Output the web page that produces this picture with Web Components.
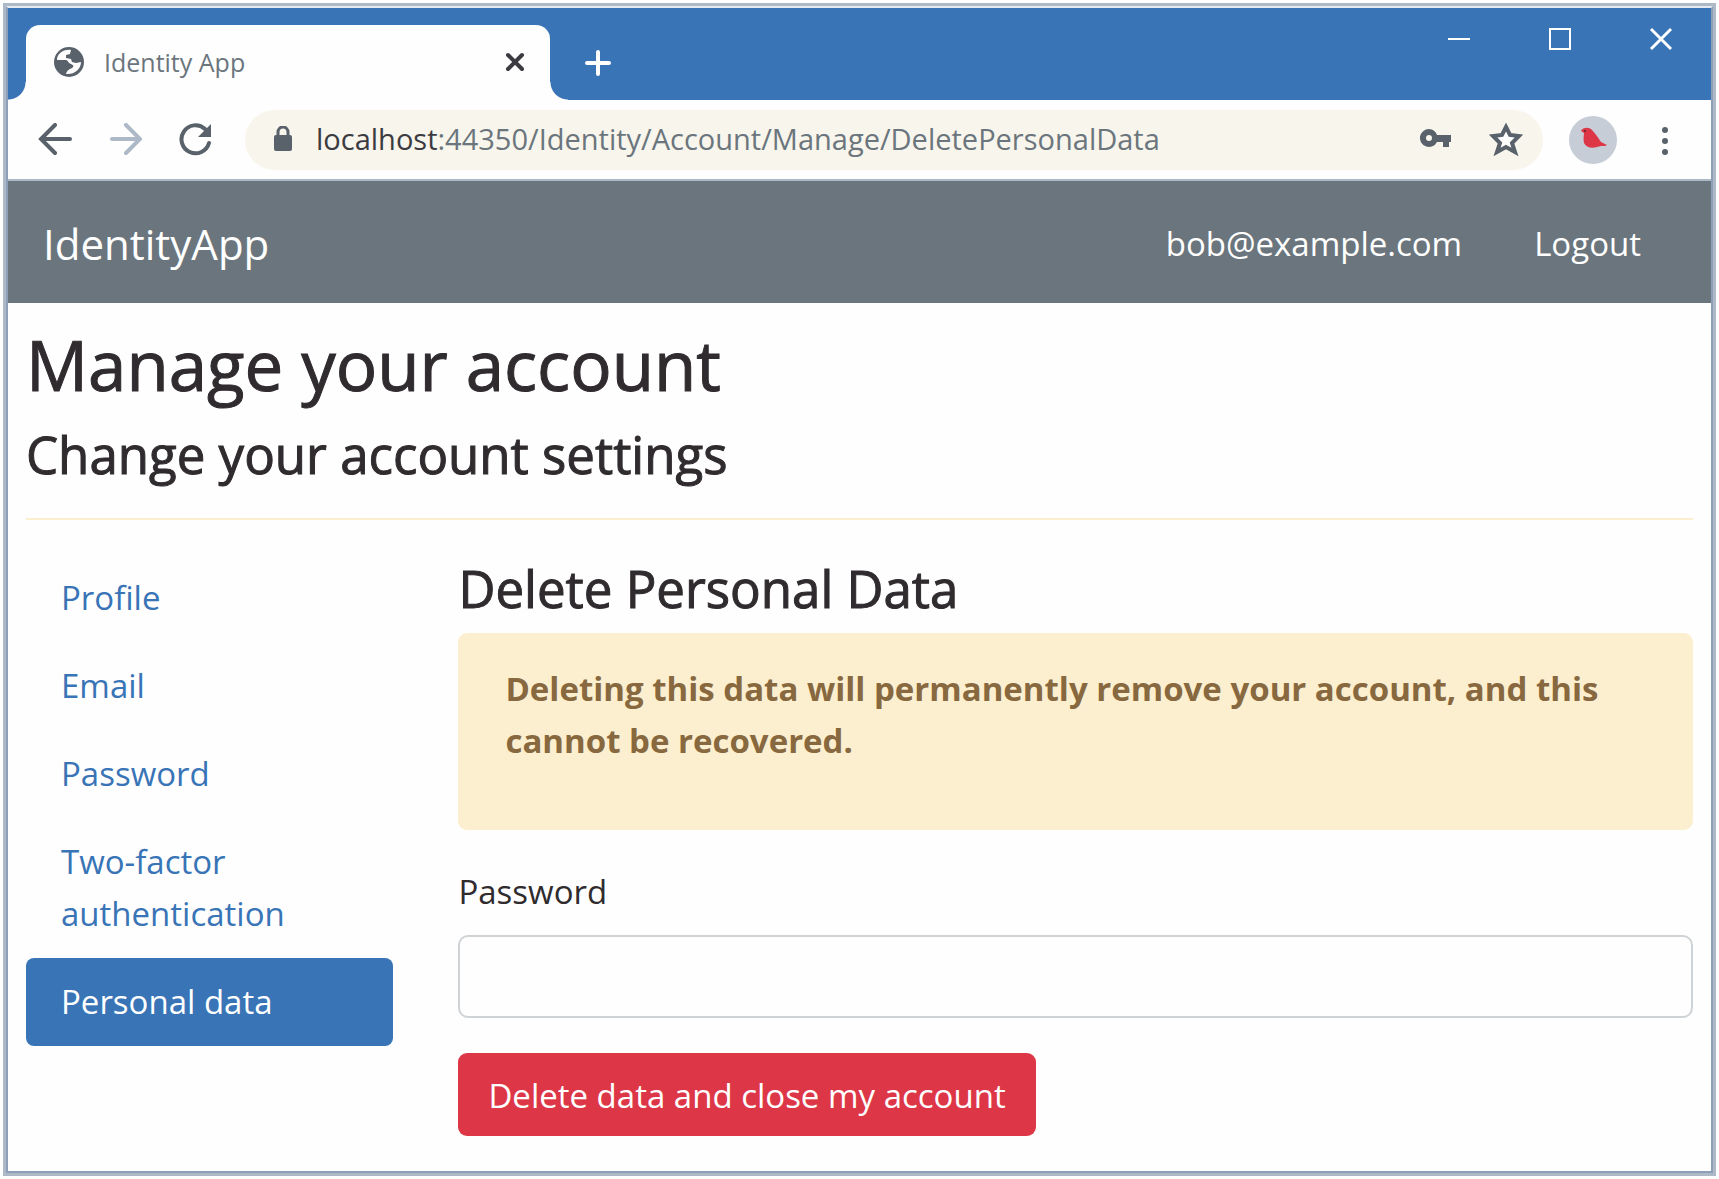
<!DOCTYPE html>
<html lang="en">
<head>
<meta charset="utf-8">
<meta name="viewport" content="width=device-width, initial-scale=1">
<title>Identity App</title>
<style>
  html, body { margin: 0; }
  body {
    --blue: #3874b6;
    --slate: #6b757d;
    --mist: #adb9c7;
    --ink: #2f2b2e;
    --red: #dd3747;
    --cream: #fbefcf;
    font-family: "Open Sans", "Noto Sans", sans-serif;
    font-size: 33px;
    line-height: 52px;
    color: var(--ink);
    background: #fefefe;
  }
</style>
</head>
<body>
<browser-window>
  <tab-strip slot="tabs" label="Identity App"></tab-strip>
  <browser-toolbar slot="toolbar">
    <address-bar host="localhost" path=":44350/Identity/Account/Manage/DeletePersonalData"></address-bar>
  </browser-toolbar>
  <app-navbar brand="IdentityApp">
    <nav-link href="#manage">bob@example.com</nav-link>
    <nav-link href="#logout">Logout</nav-link>
  </app-navbar>
  <manage-page>
    <span slot="title">Manage your account</span>
    <span slot="subtitle">Change your account settings</span>
    <side-item slot="menu" href="#profile">Profile</side-item>
    <side-item slot="menu" href="#email">Email</side-item>
    <side-item slot="menu" href="#password">Password</side-item>
    <side-item slot="menu" href="#two-factor">Two-factor authentication</side-item>
    <side-item slot="menu" href="#personal-data" active>Personal data</side-item>
    <delete-data-form>
      <span slot="heading">Delete Personal Data</span>
      <alert-box slot="alert">Deleting this data will permanently remove your account, and this cannot be recovered.</alert-box>
    </delete-data-form>
  </manage-page>
</browser-window>

<script>
const define = (name, html, setup) => {
  const template = document.createElement('template');
  template.innerHTML = html;
  customElements.define(name, class extends HTMLElement {
    constructor() {
      super();
      this.attachShadow({ mode: 'open' }).append(template.content.cloneNode(true));
    }
    connectedCallback() {
      if (setup) setup(this.shadowRoot, this);
    }
  });
};

define('browser-window', `
  <style>
    :host { display: flex; flex-direction: column; box-sizing: border-box; min-height: 100vh; padding: 3px; }
    .outer { flex: 1; display: flex; border: 3px solid var(--mist); }
    .inner { flex: 1; min-width: 0; border: 2px solid #8da0b8; border-top-color: #e4e9ef; }
  </style>
  <div class="outer"><div class="inner">
    <slot name="tabs"></slot>
    <slot name="toolbar"></slot>
    <slot></slot>
  </div></div>`);

define('tab-strip', `
  <style>
    :host { display: flex; height: 92px; background: var(--blue); }
    button { border: 0; padding: 0; background: none; display: flex; align-items: center; justify-content: center; }
    .flare { align-self: flex-end; width: 18px; height: 18px; }
    .flare.left { background: radial-gradient(circle at 0 0, var(--blue) 17px, #fefefe 18px); }
    .flare.right { background: radial-gradient(circle at 100% 0, var(--blue) 17px, #fefefe 18px); }
    .tab { display: flex; align-items: center; box-sizing: border-box; width: 524px; margin-top: 17px; padding: 0 25px 2px 27px; background: #fefefe; border-radius: 14px 14px 0 0; }
    .title { flex: 1; margin-left: 19px; font-size: 25px; line-height: 36px; color: var(--slate); }
    .new { width: 60px; margin-top: 17px; }
    .controls { display: flex; margin-left: auto; height: 61px; }
    .controls button { width: 101px; }
    svg { display: block; }
  </style>
  <span class="flare left"></span>
  <div class="tab">
    <svg width="32" height="32" viewBox="0 0 32 32"><circle cx="16" cy="16" r="15" fill="#59616a"/><path fill="#fefefe" d="M18 4C10 3 4 8 4 14h9c2 0 2 3 5 4s3 3 1 4-5 2-6 6c8 1 15-5 15-12l-5 1-4-1-1-3-5-1v-3l4-1z"/></svg>
    <span class="title"></span>
    <button aria-label="Close tab"><svg width="20" height="20" viewBox="0 0 20 20" stroke="#3b3b41" stroke-width="4" stroke-linecap="round"><path d="M3 3l14 14M17 3L3 17"/></svg></button>
  </div>
  <span class="flare right"></span>
  <button class="new" aria-label="New tab"><svg width="28" height="28" viewBox="0 0 28 28" stroke="#fff" stroke-width="4" stroke-linecap="round"><path d="M14 3v22M3 14h22"/></svg></button>
  <div class="controls">
    <button aria-label="Minimize"><svg width="24" height="24" viewBox="0 0 24 24"><path d="M1 12h22" stroke="#fff" stroke-width="2"/></svg></button>
    <button aria-label="Maximize"><svg width="24" height="24" viewBox="0 0 24 24"><rect x="2" y="2" width="20" height="20" fill="none" stroke="#fff" stroke-width="2"/></svg></button>
    <button aria-label="Close"><svg width="24" height="24" viewBox="0 0 24 24"><path d="M2 2l20 20M22 2L2 22" stroke="#fff" stroke-width="3"/></svg></button>
  </div>`, (root, host) => { root.querySelector('.title').textContent = host.getAttribute('label'); });

define('browser-toolbar', `
  <style>
    :host { display: flex; align-items: center; height: 79px; padding: 0 28px 0 30px; border-bottom: 2px solid var(--mist); background: #fefefe; }
    button { border: 0; padding: 0; background: none; flex: none; }
    svg { display: block; }
    .nav { display: flex; gap: 36px; }
    slot { display: block; flex: 1; min-width: 0; margin: 0 26px 0 33px; }
    .menu { margin-left: 34px; }
  </style>
  <div class="nav">
    <button aria-label="Back"><svg width="34" height="34" viewBox="0 0 34 34" fill="none" stroke="#59616a" stroke-width="4" stroke-linecap="round"><path d="M32 16H4M17 2L3 16l14 14"/></svg></button>
    <button aria-label="Forward"><svg width="34" height="34" viewBox="0 0 34 34" fill="none" stroke="#adb9c7" stroke-width="4" stroke-linecap="round"><path d="M4 16h28M18 2l14 14-14 14"/></svg></button>
    <button aria-label="Reload"><svg width="34" height="34" viewBox="0 0 34 34"><path d="M31 20A14 14 0 1 1 27 6" fill="none" stroke="#59616a" stroke-width="4" stroke-linecap="round"/><path d="M33 1v13H20z" fill="#59616a"/></svg></button>
  </div>
  <slot></slot>
  <button aria-label="Profile"><svg width="48" height="48" viewBox="0 0 48 48"><circle cx="24" cy="24" r="24" fill="#c6cdd7"/><path fill="#dd3747" d="M12 15C14 11 20 11 23 14c4 4 7 9 9 12l6 3-2 1h-4l-4 1c-6 2-11 0-13-4-1-4 0-8 0-10z"/><circle cx="16" cy="15" r="1" fill="#59262c"/></svg></button>
  <button class="menu" aria-label="Menu"><svg width="32" height="34" viewBox="0 0 32 34" fill="#59616a"><circle cx="14" cy="7" r="3"/><circle cx="14" cy="18" r="3"/><circle cx="14" cy="29" r="3"/></svg></button>`);

define('address-bar', `
  <style>
    :host { display: flex; align-items: center; height: 60px; padding: 0 20px 0 28px; border-radius: 30px; background: #f8f5ec; }
    .url { flex: 1; min-width: 0; margin-left: 23px; padding-bottom: 2px; font-size: 29px; line-height: 40px; white-space: nowrap; color: var(--slate); outline: 0; }
    .host { color: #3b3b41; }
    button { border: 0; padding: 0; background: none; flex: none; }
    svg { display: block; }
    .star { margin-left: 36px; }
  </style>
  <svg width="20" height="28" viewBox="0 0 20 28"><rect x="1" y="9" width="18" height="16" rx="2" fill="#59616a"/><path d="M5 10V6a5 5 0 0 1 10 0v4" fill="none" stroke="#59616a" stroke-width="3"/></svg>
  <div class="url" role="textbox" aria-label="Address" contenteditable="true" spellcheck="false"><span class="host"></span><span class="path"></span></div>
  <button aria-label="Passwords"><svg width="34" height="24" viewBox="0 0 34 24"><path fill="#59616a" fill-rule="evenodd" d="M10 1a9 9 0 0 1 8 6h14v7h-2v5h-6v-5h-6a9 9 0 1 1-8-13zM10 7a3 3 0 1 0 0 6 3 3 0 0 0 0-6z"/></svg></button>
  <button class="star" aria-label="Bookmark"><svg width="34" height="34" viewBox="0 0 34 34"><path d="M17 4l4 8 9 1-7 7 3 9-9-5-9 5 3-9-7-7 9-1z" fill="#fefefe" stroke="#59616a" stroke-width="4"/></svg></button>`,
  (root, host) => {
    root.querySelector('.host').textContent = host.getAttribute('host');
    root.querySelector('.path').textContent = host.getAttribute('path');
  });

define('app-navbar', `
  <style>
    :host { display: block; background: var(--slate); }
    nav { display: flex; align-items: center; height: 119px; padding: 3px 70px 0 35px; }
    .brand { color: #fff; font-size: 42px; line-height: 60px; text-decoration: none; }
    .links { display: flex; gap: 72px; margin-left: auto; }
  </style>
  <nav><a class="brand" href="#home"></a><div class="links"><slot></slot></div></nav>`,
  (root, host) => { root.querySelector('.brand').textContent = host.getAttribute('brand'); });

const setHref = (root, host) => { root.querySelector('a').href = host.getAttribute('href'); };

define('nav-link', `
  <style>
    :host { display: block; }
    a { color: #fff; text-decoration: none; }
  </style>
  <a><slot></slot></a>`, setHref);

define('side-item', `
  <style>
    :host { display: block; }
    a { display: block; padding: 18px 35px; border-radius: 8px; color: var(--blue); text-decoration: none; }
    :host([active]) a { background: var(--blue); color: #fff; }
  </style>
  <a><slot></slot></a>`, setHref);

define('manage-page', `
  <style>
    :host { display: block; padding: 19px 18px 32px; }
    h1, h2 { margin: 0; font-weight: 500; -webkit-text-stroke: 1px currentColor; }
    h1 { font-size: 69px; line-height: 84px; }
    h2 { margin-top: 17px; font-size: 51px; line-height: 62px; }
    hr { margin: 33px 0 34px; border: 0; border-top: 2px solid var(--cream); }
    .row { display: grid; grid-template-columns: 25fr 84fr; column-gap: 65px; }
  </style>
  <h1><slot name="title"></slot></h1>
  <h2><slot name="subtitle"></slot></h2>
  <hr>
  <div class="row">
    <nav aria-label="Account"><slot name="menu"></slot></nav>
    <main><slot></slot></main>
  </div>`);

define('alert-box', `
  <style>
    :host { display: block; padding: 30px 47px 28px; border-radius: 9px; background: var(--cream); color: #87683f; }
    p { margin: 0 0 35px; }
    strong { font-weight: 700; }
  </style>
  <p><strong><slot></slot></strong></p>`);

define('delete-data-form', `
  <style>
    :host { display: block; }
    h3 { margin: 0; padding: 3px 0 14px; font-size: 51px; line-height: 62px; font-weight: 500; -webkit-text-stroke: 1px currentColor; }
    form { margin-top: 36px; }
    label { display: block; margin-bottom: 17px; }
    input { display: block; box-sizing: border-box; width: 100%; height: 83px; padding: 0 26px; border: 2px solid #cfd3d5; border-radius: 10px; background: #fefefe; font: inherit; }
    button { display: block; margin-top: 35px; padding: 17px 30px 14px; border: 0; border-radius: 9px; background: var(--red); color: #fff; font: inherit; }
  </style>
  <h3><slot name="heading"></slot></h3>
  <slot name="alert"></slot>
  <form>
    <label for="password">Password</label>
    <input id="password" type="password" autocomplete="current-password">
    <button type="button">Delete data and close my account</button>
  </form>`);
</script>
</body>
</html>
